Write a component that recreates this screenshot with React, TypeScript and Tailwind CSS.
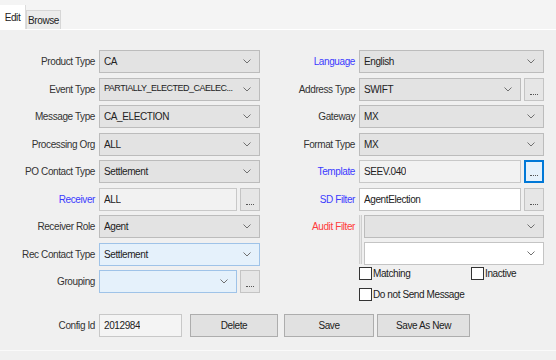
import React from 'react'

type Tone = 'grey' | 'white' | 'blue' | 'light'

const tones: Record<Tone, string> = {
  grey: 'bg-[#e3e3e3] border-[#bcbcbc]',
  white: 'bg-white border-[#c4c4c4]',
  blue: 'bg-[#e5f1fb] border-[#9fc3e8]',
  light: 'bg-[#f2f2f2] border-[#c8c8c8]',
}

function Chevron() {
  return (
    <svg width="8" height="5" viewBox="0 0 8 5" className="shrink-0">
      <path d="M0.5 0.5 L4 4 L7.5 0.5" fill="none" stroke="#707070" strokeWidth="1" />
    </svg>
  )
}

function Combo({
  value = '',
  tone = 'grey',
  className = '',
  textClass = '',
}: {
  value?: string
  tone?: Tone
  className?: string
  textClass?: string
}) {
  return (
    <div className={`flex items-center min-w-0 h-[23px] border pl-[4px] pr-[8px] ${tones[tone]} ${className}`}>
      <span className={`flex-1 min-w-0 whitespace-nowrap overflow-hidden ${textClass}`}>{value}</span>
      <Chevron />
    </div>
  )
}

function Field({ value = '', tone = 'light', className = '' }: { value?: string; tone?: Tone; className?: string }) {
  return (
    <div className={`flex items-center min-w-0 h-[23px] border px-[4px] ${tones[tone]} ${className}`}>
      <span className="whitespace-nowrap overflow-hidden">{value}</span>
    </div>
  )
}

function Dots({ focus = false }: { focus?: boolean }) {
  return (
    <div
      className={`w-[20px] h-[23px] shrink-0 flex items-end justify-center pb-[5px] border ${
        focus ? 'bg-[#e5f1fb] border-[#0078d7] border-2' : 'bg-[#e6e6e6] border-[#c4c4c4]'
      }`}
    >
      <div className="w-[8px] border-t border-dotted border-[#555]" />
    </div>
  )
}

function Row({ label, color = 'text-[#333]', lw, children }: { label: string; color?: string; lw: string; children: React.ReactNode }) {
  return (
    <div className="flex items-center h-[23px]">
      <div className={`${lw} shrink-0 text-right pr-[4px] whitespace-nowrap ${color}`}>{label}</div>
      <div className="flex-1 flex items-center gap-[3px] min-w-0">{children}</div>
    </div>
  )
}

function Check({ label, className = '' }: { label: string; className?: string }) {
  return (
    <div className={`flex items-center gap-[1px] ${className}`}>
      <div className="w-[13px] h-[13px] border border-[#333] bg-white" />
      <span className="text-[#222]">{label}</span>
    </div>
  )
}

function Btn({ label, w }: { label: string; w: string }) {
  return (
    <div className={`${w} shrink-0 h-[23px] flex items-center justify-center bg-[#e1e1e1] border border-[#adadad] text-[#222]`}>
      {label}
    </div>
  )
}

export default function App() {
  const L = 'w-[99px]'
  const R = 'w-[89px]'
  return (
    <div
      className="w-[556px] h-[360px] bg-[#f0f0f0] text-[10px] tracking-[-0.4px] text-[#222] overflow-hidden"
      style={{ fontFamily: '"Liberation Sans", Arial, sans-serif' }}
    >
      <div className="flex items-end h-[30px] bg-[#f4f4f4] border-b border-white">
        <div className="h-[24px] w-[26px] bg-white flex items-center justify-center border-r border-[#dcdcdc]">Edit</div>
        <div className="h-[19px] w-[35px] bg-[#ececec] border border-b-0 border-[#d6d6d6] flex items-center justify-center">
          Browse
        </div>
      </div>

      <div className="flex pt-[20px] h-[321px] border-b border-[#fafafa]">
        <div className="w-[260px] flex flex-col gap-[4.5px]">
          <Row label="Product Type" lw={L}><Combo value="CA" className="flex-1" /></Row>
          <Row label="Event Type" lw={L}>
            <Combo value="PARTIALLY_ELECTED_CAELEC..." className="flex-1" textClass="text-[9px] tracking-[-0.5px]" />
          </Row>
          <Row label="Message Type" lw={L}><Combo value="CA_ELECTION" className="flex-1" /></Row>
          <Row label="Processing Org" lw={L}><Combo value="ALL" className="flex-1" /></Row>
          <Row label="PO Contact Type" lw={L}><Combo value="Settlement" className="flex-1" /></Row>
          <Row label="Receiver" color="text-[#3b3bff]" lw={L}>
            <Field value="ALL" className="flex-1" />
            <Dots />
          </Row>
          <Row label="Receiver Role" lw={L}><Combo value="Agent" className="flex-1" /></Row>
          <Row label="Rec Contact Type" lw={L}><Combo value="Settlement" tone="blue" className="flex-1" /></Row>
          <Row label="Grouping" lw={L}>
            <Combo tone="blue" className="flex-1" />
            <Dots />
          </Row>
          <div className="mt-[16px] flex items-center h-[23px]">
            <div className={`${L} shrink-0 text-right pr-[4px] text-[#333]`}>Config Id</div>
            <Field value="2012984" className="w-[83px] shrink-0 bg-[#f4f4f4]" />
            <div className="ml-[8px] shrink-0"><Btn label="Delete" w="w-[88px]" /></div>
          </div>
        </div>

        <div className="ml-[10px] w-[274px] flex flex-col gap-[4.5px]">
          <Row label="Language" color="text-[#3b3bff]" lw={R}><Combo value="English" className="flex-1" /></Row>
          <Row label="Address Type" lw={R}>
            <Combo value="SWIFT" className="flex-1" />
            <Dots />
          </Row>
          <Row label="Gateway" lw={R}><Combo value="MX" className="flex-1" /></Row>
          <Row label="Format Type" lw={R}><Combo value="MX" className="flex-1" /></Row>
          <Row label="Template" color="text-[#3b3bff]" lw={R}>
            <Field value="SEEV.040" className="flex-1" />
            <Dots focus />
          </Row>
          <Row label="SD Filter" color="text-[#3b3bff]" lw={R}>
            <Field value="AgentElection" tone="white" className="flex-1" />
            <Dots />
          </Row>
          <div className="flex items-start h-[50px]">
            <div className={`${R} shrink-0 h-[23px] flex items-center justify-end pr-[4px] text-[#ff3b3b]`}>Audit Filter</div>
            <div className="w-[3px] h-[49px] bg-[#e8e8e8] border-x border-[#cfcfcf] mr-[2px]" />
            <div className="flex-1 flex flex-col gap-[4px]">
              <Combo />
              <Combo tone="white" />
            </div>
          </div>
          <div className="pl-[89px] flex flex-col gap-[6px] -mt-[4px]">
            <div className="flex">
              <Check label="Matching" className="w-[112px]" />
              <Check label="Inactive" />
            </div>
            <Check label="Do not Send Message" />
          </div>
          <div className="flex gap-[3px] mt-[8px] ml-[14px]">
            <Btn label="Save" w="w-[90px]" />
            <Btn label="Save As New" w="w-[93px]" />
          </div>
        </div>
      </div>
    </div>
  )
}
